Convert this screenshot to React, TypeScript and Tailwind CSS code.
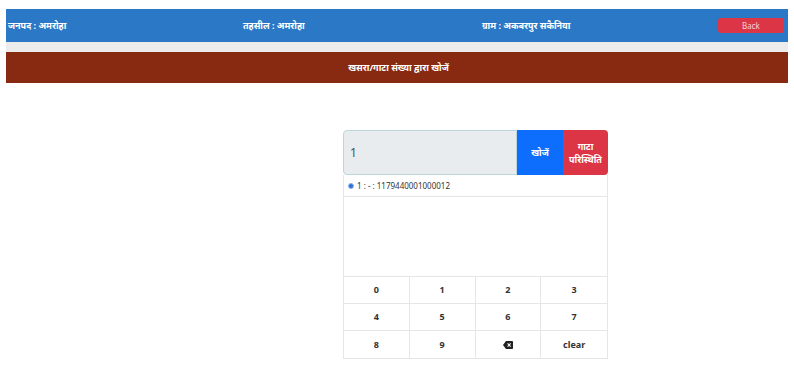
const keys = ["0", "1", "2", "3", "4", "5", "6", "7", "8", "9", "back", "clear"]

const BackspaceIcon = () => (
  <svg width="10" height="8" viewBox="0 0 10 8">
    <path d="M3 0h6.2a.8.8 0 0 1 .8.8v6.4a.8.8 0 0 1-.8.8H3L0 4z" fill="#222" />
    <path d="M4.6 2.3l3 3.4M7.6 2.3l-3 3.4" stroke="#fff" strokeWidth="1.1" />
  </svg>
)

const App = () => {
  return (
    <div
      className="h-[371px] w-[794px] overflow-hidden bg-white"
      style={{ fontFamily: '"Noto Sans", "Noto Sans Devanagari", "Liberation Sans", sans-serif' }}
    >
      <header className="mx-[6px] mt-[9px] flex h-[33px] items-center bg-[#2b78c6] text-[9px] font-bold text-white">
        <div className="w-[237px] pl-[2px]">जनपद : अमरोहा</div>
        <div className="w-[239px]">तहसील : अमरोहा</div>
        <div className="flex-1">ग्राम : अकबरपुर सकैनिया</div>
        <button className="mr-[4px] h-[15px] w-[66px] rounded-[3px] bg-[#dc3545] text-[8px] font-normal text-[#f6d4d8]">
          Back
        </button>
      </header>
      <div className="mx-[6px] h-[10px] bg-[#ececec]" />
      <div className="mx-[6px] flex h-[31px] items-center justify-center bg-[#882a12] pl-[3px] text-[9px] font-bold text-white">
        खसरा/गाटा संख्या द्वारा खोजें
      </div>

      <div className="ml-[343px] mt-[47px] w-[265px]">
        <div className="flex h-[45px]">
          <div className="flex flex-1 items-center rounded-l-[4px] border border-[#bcd7db] bg-[#e9ecef] pl-[6px] text-[12px] text-[#495057]">
            1
          </div>
          <button className="w-[46px] bg-[#0d6efd] text-[9px] font-bold text-white">खोजें</button>
          <button className="w-[45px] rounded-r-[4px] bg-[#dc3545] text-[9px] font-bold leading-[13px] text-white">
            गाटा
            <br />
            परिस्थिति
          </button>
        </div>
        <div className="border border-t-0 border-[#e6e6e6]">
          <div className="flex h-[22px] items-center gap-[3px] border-b border-[#e6e6e6] pl-[4px] text-[8px] text-[#333]">
            <span className="inline-block h-[6px] w-[6px] rounded-full border border-[#8fb3e6] bg-[#2f6fd6]" />
            <span>1 : - : 1179440001000012</span>
          </div>
          <div className="h-[80px] border-b border-[#e6e6e6]" />
          <div className="grid grid-cols-4">
            {keys.map((k, i) => (
              <div
                key={k}
                className={
                  "flex h-[27px] items-center justify-center text-[9px] font-bold text-[#333] " +
                  (i % 4 !== 3 ? "border-r border-[#e6e6e6] " : "") +
                  (i < 8 ? "border-b border-[#e6e6e6]" : "")
                }
              >
                {k === "back" ? <BackspaceIcon /> : k}
              </div>
            ))}
          </div>
        </div>
      </div>
    </div>
  )
}

export default App
